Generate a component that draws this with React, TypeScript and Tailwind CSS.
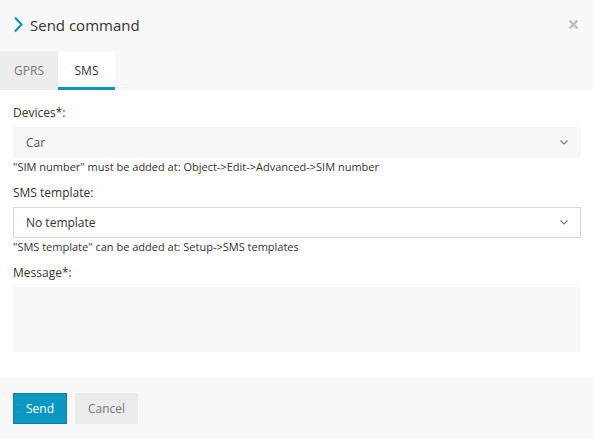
export default function App() {
  return (
    <div className="flex h-[439px] w-[593px] flex-col bg-white font-['Open_Sans',sans-serif] text-[#333]">
      <header className="bg-[#f8f8f8]">
        <div className="flex h-[51px] items-center justify-between pl-[13px] pr-[14px]">
          <div className="flex items-center gap-[6px]">
            <svg width="11" height="17" viewBox="0 0 11 17" className="mt-[-2px]">
              <path d="M2 1.5 L8.5 8.5 L2 15.5" fill="none" stroke="#0a94bf" strokeWidth="2.2" />
            </svg>
            <h1 className="text-[15px] leading-none text-[#333]">Send command</h1>
          </div>
          <svg width="11" height="11" viewBox="0 0 11 11" className="mt-[-3px]">
            <path d="M1.5 1.5 L9.5 9.5 M9.5 1.5 L1.5 9.5" stroke="#bdbdbd" strokeWidth="2.4" />
          </svg>
        </div>
        <nav className="flex h-[39px] text-[12px]">
          <div className="flex w-[58px] items-center justify-center bg-[#ececec] text-[#777]">GPRS</div>
          <div className="flex w-[57px] items-center justify-center border-b-[3px] border-[#0a94bf] bg-white pt-[3px] text-[#333]">
            SMS
          </div>
        </nav>
      </header>

      <main className="flex flex-1 flex-col pl-[13px] pr-[12px] pt-[14px] text-[12px]">
        <label className="leading-[18px]">Devices*:</label>
        <div className="mt-[5px] flex h-[31px] items-center justify-between bg-[#f7f7f7] pl-[13px] pr-[13px] text-[#555]">
          <span>Car</span>
          <Chevron />
        </div>
        <p className="mt-[1px] text-[11px] leading-[16px] text-[#333]">
          "SIM number" must be added at: Object-&gt;Edit-&gt;Advanced-&gt;SIM number
        </p>

        <label className="mt-[9px] leading-[18px]">SMS template:</label>
        <div className="mt-[5px] flex h-[31px] items-center justify-between border border-[#d9d9d9] bg-white pl-[12px] pr-[12px] text-[#333]">
          <span>No template</span>
          <Chevron />
        </div>
        <p className="mt-[1px] text-[11px] leading-[16px] text-[#333]">
          "SMS template" can be added at: Setup-&gt;SMS templates
        </p>

        <label className="mt-[9px] leading-[18px]">Message*:</label>
        <div className="mt-[5px] h-[65px] bg-[#f8f8f8]" />
      </main>

      <footer className="flex h-[62px] items-start gap-[8px] bg-[#f8f8f8] px-[13px] pt-[16px] text-[12px]">
        <button className="h-[31px] w-[54px] border border-[#0a86ab] bg-[#0a98c2] text-white">Send</button>
        <button className="h-[31px] w-[63px] bg-[#ebebeb] text-[#777]">Cancel</button>
      </footer>
    </div>
  );
}

function Chevron() {
  return (
    <svg width="8" height="5" viewBox="0 0 8 5">
      <path d="M0.5 0.5 L4 4 L7.5 0.5" fill="none" stroke="#777" strokeWidth="1.1" />
    </svg>
  );
}
